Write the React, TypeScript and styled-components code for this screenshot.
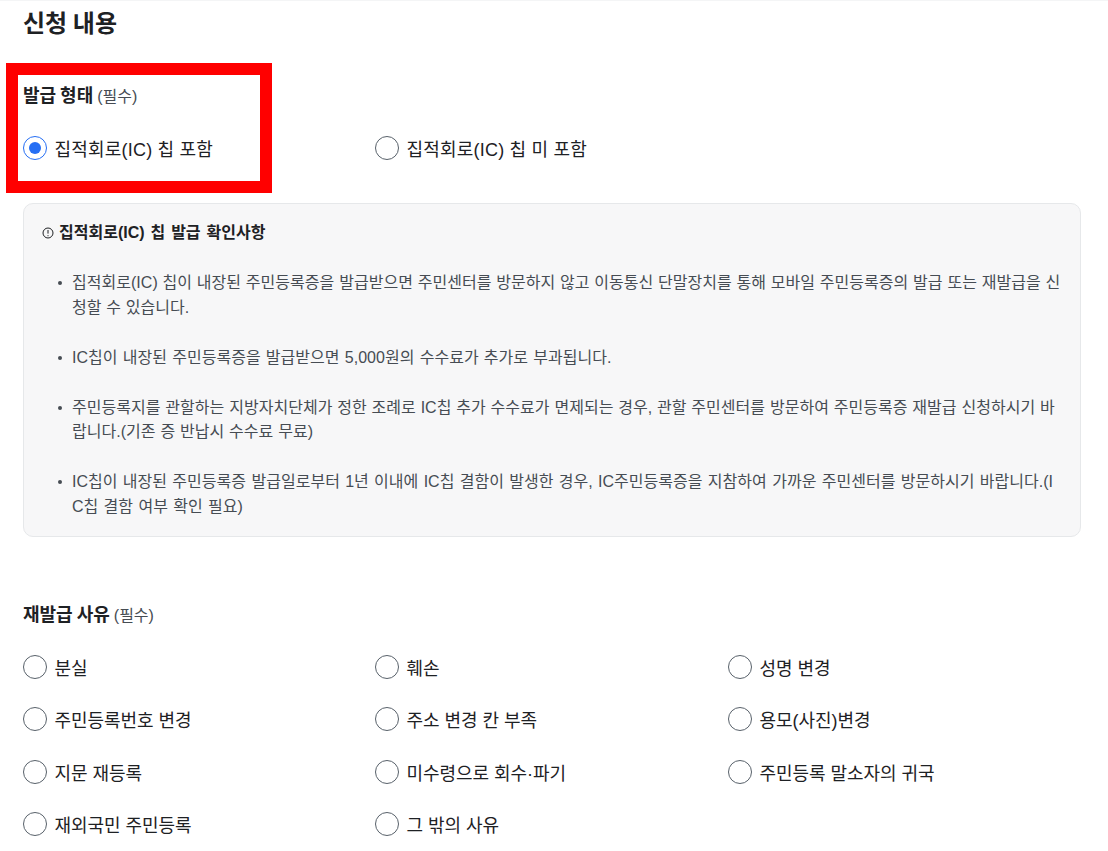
import styled, { createGlobalStyle } from 'styled-components';

const GlobalStyle = createGlobalStyle`
    html, body {
        margin: 0;
        padding: 0;
        background: #fff;
        overflow: hidden;
    }
    body {
        font-family: "Liberation Sans", "Noto Sans CJK KR", sans-serif;
        color: #1e2124;
    }
`;

const Page = styled.div`
    width: 1108px;
    height: 851px;
    padding: 0 27px 0 23px;
    box-sizing: border-box;
    border-top: 1px solid #f4f5f6;
    overflow: hidden;
`;

const Title = styled.h2`
    margin: 0;
    font-size: 24px;
    line-height: 45px;
    font-weight: 700;
    word-spacing: -1px;
    color: #1e2124;
`;

const Label = styled.div`
    font-size: 18px;
    line-height: 26px;
    font-weight: 700;
    color: #1e2124;
    word-spacing: -1px;
    span {
        font-size: 16px;
        font-weight: 400;
        color: #464c53;
        margin-left: 4px;
    }
`;

const Highlighted = styled.div`
    position: relative;
    margin-top: 37px;
`;

const RedFrame = styled.div`
    position: absolute;
    left: -17px;
    top: -20px;
    width: 266px;
    height: 130px;
    border: 12px solid #ff0000;
    box-sizing: border-box;
    pointer-events: none;
`;

const Options = styled.div`
    display: grid;
    grid-template-columns: 352px 353px 1fr;
    row-gap: 27.5px;
    margin-top: 25px;
`;

const Option = styled.div<{ $spread?: number }>`
    display: flex;
    align-items: center;
    gap: 7.5px;
    height: 25px;
    font-size: 18px;
    letter-spacing: ${(p) => p.$spread ?? -0.05}px;
    color: #1e2124;
`;

const Radio = styled.span<{ $on?: boolean }>`
    width: 24px;
    height: 24px;
    box-sizing: border-box;
    border-radius: 50%;
    flex: none;
    background: #fff;
    border: ${(p) => (p.$on ? '1px solid #256ef4' : '1px solid #58616a')};
    display: flex;
    align-items: center;
    justify-content: center;
    &::after {
        content: '';
        display: ${(p) => (p.$on ? 'block' : 'none')};
        width: 12px;
        height: 12px;
        border-radius: 50%;
        background: #256ef4;
    }
`;

const Notice = styled.div`
    margin-top: 43px;
    width: 1058px;
    height: 334px;
    box-sizing: border-box;
    padding: 17px 18px 0;
    background: #f7f7f8;
    border: 1px solid #e6e8ea;
    border-radius: 10px;
`;

const NoticeTitle = styled.div`
    display: flex;
    align-items: center;
    gap: 5px;
    font-size: 16px;
    line-height: 24px;
    font-weight: 700;
    word-spacing: 1.5px;
    color: #1e2124;
`;

const NoticeList = styled.ul`
    list-style: none;
    margin: 26px 0 0;
    padding: 0 0 0 16px;
`;

const NoticeItem = styled.li<{ $gap: number }>`
    position: relative;
    padding-left: 14px;
    margin-bottom: 25.6px;
    font-size: 16px;
    line-height: 24.5px;
    letter-spacing: 0.03px;
    word-spacing: ${(p) => p.$gap}px;
    color: #464c53;
    word-break: break-all;
    &::before {
        content: '';
        position: absolute;
        left: 0;
        top: 10px;
        width: 4px;
        height: 4px;
        border-radius: 50%;
        background: #464c53;
    }
`;

const Section = styled.div`
    margin-top: 65px;
`;

const issueOptions = ['집적회로(IC) 칩 포함', '집적회로(IC) 칩 미 포함'];

const notices = [
    {
        gap: 0.3,
        text: '집적회로(IC) 칩이 내장된 주민등록증을 발급받으면 주민센터를 방문하지 않고 이동통신 단말장치를 통해 모바일 주민등록증의 발급 또는 재발급을 신청할 수 있습니다.',
    },
    {
        gap: 0.7,
        text: 'IC칩이 내장된 주민등록증을 발급받으면 5,000원의 수수료가 추가로 부과됩니다.',
    },
    {
        gap: 0.35,
        text: '주민등록지를 관할하는 지방자치단체가 정한 조례로 IC칩 추가 수수료가 면제되는 경우, 관할 주민센터를 방문하여 주민등록증 재발급 신청하시기 바랍니다.(기존 증 반납시 수수료 무료)',
    },
    {
        gap: 0.8,
        text: 'IC칩이 내장된 주민등록증 발급일로부터 1년 이내에 IC칩 결함이 발생한 경우, IC주민등록증을 지참하여 가까운 주민센터를 방문하시기 바랍니다.(IC칩 결함 여부 확인 필요)',
    },
];

const reasons = [
    '분실',
    '훼손',
    '성명 변경',
    '주민등록번호 변경',
    '주소 변경 칸 부족',
    '용모(사진)변경',
    '지문 재등록',
    '미수령으로 회수·파기',
    '주민등록 말소자의 귀국',
    '재외국민 주민등록',
    '그 밖의 사유',
];

function App() {
    return (
        <Page>
            <GlobalStyle />
            <Title>신청 내용</Title>
            <Highlighted>
                <RedFrame />
                <Label>
                    발급 형태<span>(필수)</span>
                </Label>
                <Options>
                    {issueOptions.map((text, i) => (
                        <Option key={text} $spread={0.2}>
                            <Radio $on={i === 0} />
                            {text}
                        </Option>
                    ))}
                </Options>
            </Highlighted>
            <Notice>
                <NoticeTitle>
                    <svg width="12" height="12" viewBox="0 0 12 12" fill="none">
                        <circle cx="6" cy="6" r="5" stroke="#1e2124" strokeWidth="1" />
                        <path d="M6 3v3.6M6 8.2v1" stroke="#1e2124" strokeWidth="1" />
                    </svg>
                    집적회로(IC) 칩 발급 확인사항
                </NoticeTitle>
                <NoticeList>
                    {notices.map((item) => (
                        <NoticeItem key={item.text} $gap={item.gap}>
                            {item.text}
                        </NoticeItem>
                    ))}
                </NoticeList>
            </Notice>
            <Section>
                <Label>
                    재발급 사유<span>(필수)</span>
                </Label>
                <Options>
                    {reasons.map((text) => (
                        <Option key={text}>
                            <Radio />
                            {text}
                        </Option>
                    ))}
                </Options>
            </Section>
        </Page>
    );
}

export default App;
